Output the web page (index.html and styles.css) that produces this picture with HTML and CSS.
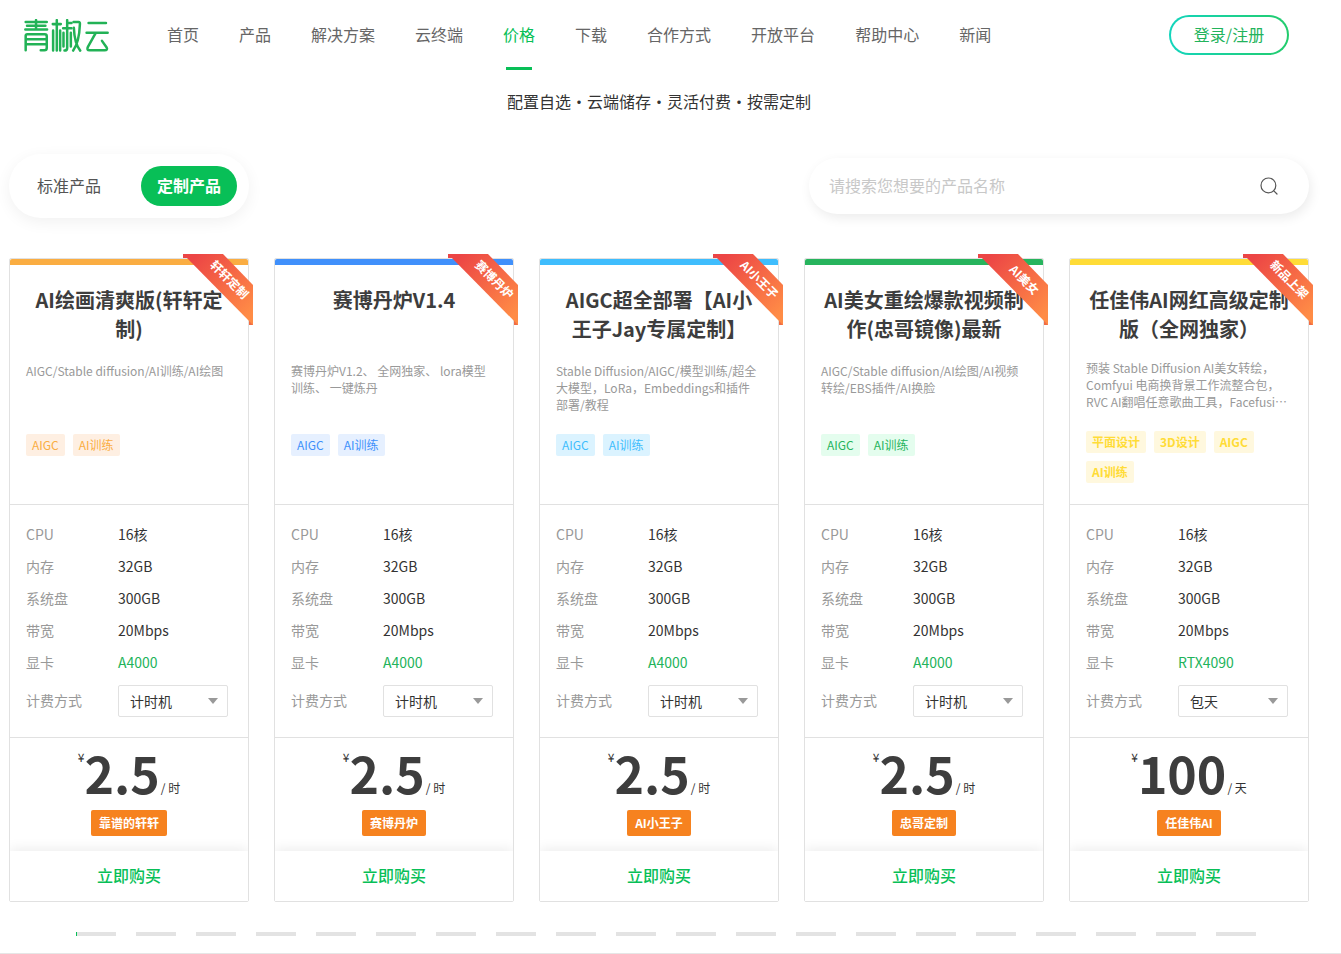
FILE: index.html
```html
<!DOCTYPE html>
<html lang="zh-CN">
<head>
<meta charset="utf-8">
<meta name="viewport" content="width=device-width, initial-scale=1">
<title>青椒云 - 价格</title>
<link rel="stylesheet" href="styles.css">
</head>
<body>
<header class="header">
  <a class="logo" href="#" aria-label="青椒云">
    <svg viewBox="0 0 254 98" width="85" height="33" fill="none" stroke="#22b256" stroke-width="7.5" stroke-linecap="round" stroke-linejoin="round">
      <path d="M5 9H68M9 20H64M4 31H69M36 3V31"/>
      <path d="M5 93V50Q5 45 10 45H62Q68 45 68 51V86Q68 93 61 93H50M5 60H68M5 75H68"/>
      <path d="M86 15H110M98 3V94M87 34V94M108 34V94"/>
      <path d="M129 3V86Q129 94 121 94M129 12H142M117 27H142M118 41V82M140 41V82"/>
      <path d="M148 9H163Q168 9 167 16C166 42 160 76 147 94M149 26C150 52 156 80 168 94"/>
      <path d="M193 12H245M187 41H250M214 42L191 83Q186 93 196 93H241Q251 93 247 85L233 65"/>
    </svg>
  </a>
  <nav class="nav">
    <a class="nav-link" href="#">首页</a>
    <a class="nav-link" href="#">产品</a>
    <a class="nav-link" href="#">解决方案</a>
    <a class="nav-link" href="#">云终端</a>
    <a class="nav-link nav-link-active" href="#" aria-current="page">价格</a>
    <a class="nav-link" href="#">下载</a>
    <a class="nav-link" href="#">合作方式</a>
    <a class="nav-link" href="#">开放平台</a>
    <a class="nav-link" href="#">帮助中心</a>
    <a class="nav-link" href="#">新闻</a>
  </nav>
  <a class="login" href="#">登录/注册</a>
</header>

<main class="main">
  <p class="subtitle">配置自选・云端储存・灵活付费・按需定制</p>

  <div class="toolbar">
    <div class="tabs">
      <button class="tab" type="button">标准产品</button>
      <button class="tab tab-active" type="button">定制产品</button>
    </div>
    <form class="search">
      <input class="search-input" type="text" placeholder="请搜索您想要的产品名称" aria-label="搜索产品">
      <button class="search-button" type="button" aria-label="搜索">
        <svg width="20" height="20" viewBox="0 0 20 20" fill="none" stroke="#555" stroke-width="1.2" stroke-linecap="round"><circle cx="9.4" cy="9.4" r="7.4"/><path d="M14.8 14.8L18 18"/></svg>
      </button>
    </form>
  </div>

  <svg class="defs" width="0" height="0" aria-hidden="true">
    <defs>
      <linearGradient id="ribbon-fill" x1="0" y1="0" x2="1" y2="1">
        <stop offset="0.1" stop-color="#ec4545"/>
        <stop offset="0.9" stop-color="#ff8c46"/>
      </linearGradient>
      <symbol id="ribbon" viewBox="0 0 70 71">
        <path d="M0 0H5V4H0Z" fill="#e9464a"/>
        <path d="M66 66H70V71H66Z" fill="#f06c45"/>
        <path d="M0 0H40L70 31V71Z" fill="url(#ribbon-fill)"/>
      </symbol>
    </defs>
  </svg>

  <section class="cards">
    <article class="card theme-orange">
      <svg class="ribbon" viewBox="0 0 70 71"><use href="#ribbon"/><text class="ribbon-text" transform="translate(46 26) rotate(45)" y="4">轩轩定制</text></svg>
      <div class="summary">
        <h2 class="title">AI绘画清爽版(轩轩定制)</h2>
        <p class="desc">AIGC/Stable diffusion/AI训练/AI绘图</p>
        <div class="tags"><span class="tag">AIGC</span><span class="tag">AI训练</span></div>
      </div>
      <dl class="specs">
        <dt>CPU</dt><dd>16核</dd>
        <dt>内存</dt><dd>32GB</dd>
        <dt>系统盘</dt><dd>300GB</dd>
        <dt>带宽</dt><dd>20Mbps</dd>
        <dt>显卡</dt><dd class="gpu">A4000</dd>
        <dt class="billing"><label for="bill1">计费方式</label></dt>
        <dd class="billing"><span class="picker"><select class="select" id="bill1"><option>计时机</option></select></span></dd>
      </dl>
      <div class="offer">
        <p class="price"><span class="currency">¥</span><strong class="amount">2.5</strong><span class="unit">/ 时</span></p>
        <span class="seller">靠谱的轩轩</span>
      </div>
      <button class="buy" type="button">立即购买</button>
    </article>

    <article class="card theme-blue">
      <svg class="ribbon" viewBox="0 0 70 71"><use href="#ribbon"/><text class="ribbon-text" transform="translate(46 26) rotate(45)" y="4">赛博丹炉</text></svg>
      <div class="summary">
        <h2 class="title">赛博丹炉V1.4</h2>
        <p class="desc">赛博丹炉V1.2、 全网独家、 lora模型训练、 一键炼丹</p>
        <div class="tags"><span class="tag">AIGC</span><span class="tag">AI训练</span></div>
      </div>
      <dl class="specs">
        <dt>CPU</dt><dd>16核</dd>
        <dt>内存</dt><dd>32GB</dd>
        <dt>系统盘</dt><dd>300GB</dd>
        <dt>带宽</dt><dd>20Mbps</dd>
        <dt>显卡</dt><dd class="gpu">A4000</dd>
        <dt class="billing"><label for="bill2">计费方式</label></dt>
        <dd class="billing"><span class="picker"><select class="select" id="bill2"><option>计时机</option></select></span></dd>
      </dl>
      <div class="offer">
        <p class="price"><span class="currency">¥</span><strong class="amount">2.5</strong><span class="unit">/ 时</span></p>
        <span class="seller">赛博丹炉</span>
      </div>
      <button class="buy" type="button">立即购买</button>
    </article>

    <article class="card theme-sky">
      <svg class="ribbon" viewBox="0 0 70 71"><use href="#ribbon"/><text class="ribbon-text" transform="translate(46 26) rotate(45)" y="4">AI小王子</text></svg>
      <div class="summary">
        <h2 class="title">AIGC超全部署【AI小王子Jay专属定制】</h2>
        <p class="desc">Stable Diffusion/AIGC/模型训练/超全大模型，LoRa，Embeddings和插件部署/教程</p>
        <div class="tags"><span class="tag">AIGC</span><span class="tag">AI训练</span></div>
      </div>
      <dl class="specs">
        <dt>CPU</dt><dd>16核</dd>
        <dt>内存</dt><dd>32GB</dd>
        <dt>系统盘</dt><dd>300GB</dd>
        <dt>带宽</dt><dd>20Mbps</dd>
        <dt>显卡</dt><dd class="gpu">A4000</dd>
        <dt class="billing"><label for="bill3">计费方式</label></dt>
        <dd class="billing"><span class="picker"><select class="select" id="bill3"><option>计时机</option></select></span></dd>
      </dl>
      <div class="offer">
        <p class="price"><span class="currency">¥</span><strong class="amount">2.5</strong><span class="unit">/ 时</span></p>
        <span class="seller">AI小王子</span>
      </div>
      <button class="buy" type="button">立即购买</button>
    </article>

    <article class="card theme-green">
      <svg class="ribbon" viewBox="0 0 70 71"><use href="#ribbon"/><text class="ribbon-text" transform="translate(46 26) rotate(45)" y="4">AI美女</text></svg>
      <div class="summary">
        <h2 class="title">AI美女重绘爆款视频制作(忠哥镜像)最新</h2>
        <p class="desc">AIGC/Stable diffusion/AI绘图/AI视频转绘/EBS插件/AI换脸</p>
        <div class="tags"><span class="tag">AIGC</span><span class="tag">AI训练</span></div>
      </div>
      <dl class="specs">
        <dt>CPU</dt><dd>16核</dd>
        <dt>内存</dt><dd>32GB</dd>
        <dt>系统盘</dt><dd>300GB</dd>
        <dt>带宽</dt><dd>20Mbps</dd>
        <dt>显卡</dt><dd class="gpu">A4000</dd>
        <dt class="billing"><label for="bill4">计费方式</label></dt>
        <dd class="billing"><span class="picker"><select class="select" id="bill4"><option>计时机</option></select></span></dd>
      </dl>
      <div class="offer">
        <p class="price"><span class="currency">¥</span><strong class="amount">2.5</strong><span class="unit">/ 时</span></p>
        <span class="seller">忠哥定制</span>
      </div>
      <button class="buy" type="button">立即购买</button>
    </article>

    <article class="card theme-yellow">
      <svg class="ribbon" viewBox="0 0 70 71"><use href="#ribbon"/><text class="ribbon-text" transform="translate(46 26) rotate(45)" y="4">新品上架</text></svg>
      <div class="summary summary-dense">
        <h2 class="title">任佳伟AI网红高级定制版（全网独家）</h2>
        <p class="desc">预装 Stable Diffusion AI美女转绘，Comfyui 电商换背景工作流整合包，RVC AI翻唱任意歌曲工具，Facefusi…</p>
        <div class="tags"><span class="tag">平面设计</span><span class="tag">3D设计</span><span class="tag">AIGC</span><span class="tag">AI训练</span></div>
      </div>
      <dl class="specs">
        <dt>CPU</dt><dd>16核</dd>
        <dt>内存</dt><dd>32GB</dd>
        <dt>系统盘</dt><dd>300GB</dd>
        <dt>带宽</dt><dd>20Mbps</dd>
        <dt>显卡</dt><dd class="gpu">RTX4090</dd>
        <dt class="billing"><label for="bill5">计费方式</label></dt>
        <dd class="billing"><span class="picker"><select class="select" id="bill5"><option>包天</option></select></span></dd>
      </dl>
      <div class="offer">
        <p class="price"><span class="currency">¥</span><strong class="amount">100</strong><span class="unit">/ 天</span></p>
        <span class="seller">任佳伟AI</span>
      </div>
      <button class="buy" type="button">立即购买</button>
    </article>
  </section>

  <div class="pager">
    <span class="page page-active"></span><span class="page"></span><span class="page"></span><span class="page"></span><span class="page"></span>
    <span class="page"></span><span class="page"></span><span class="page"></span><span class="page"></span><span class="page"></span>
    <span class="page"></span><span class="page"></span><span class="page"></span><span class="page"></span><span class="page"></span>
    <span class="page"></span><span class="page"></span><span class="page"></span><span class="page"></span><span class="page"></span>
  </div>
</main>
<hr class="divider">
</body>
</html>
```

FILE: styles.css
```css
* {
  box-sizing: border-box;
}

body,
p,
h2,
dl,
dd {
  margin: 0;
}

body {
  background: #fff;
  color: #333;
  font-family: "Noto Sans CJK SC", sans-serif;
  font-size: 14px;
}

button,
input,
select {
  font-family: inherit;
}

a {
  color: inherit;
  text-decoration: none;
}

.header {
  display: flex;
  align-items: center;
  height: 70px;
  padding: 0 52px 0 24px;
}

.logo {
  display: flex;
  margin-right: 58px;
}

.nav {
  display: flex;
  flex: 1;
  gap: 40px;
  height: 70px;
  color: #666;
  font-size: 16px;
  line-height: 68px;
  white-space: nowrap;
}

.nav-link-active {
  display: flex;
  flex-direction: column;
  color: #08bf57;
}

.nav-link-active::after {
  content: "";
  flex: none;
  align-self: center;
  width: 26px;
  height: 3px;
  margin-top: -1px;
  background: #08bf57;
}

.login {
  width: 120px;
  height: 40px;
  border: 2px solid transparent;
  border-radius: 20px;
  background: linear-gradient(#fff, #fff) padding-box, linear-gradient(90deg, #13d5bd, #22cc6c) border-box;
  color: #22b35b;
  font-size: 16px;
  line-height: 34px;
  text-align: center;
}

.main {
  padding: 0 32px 0 9px;
}

.subtitle {
  padding: 19px 0 1px;
  font-size: 16px;
  line-height: 24px;
  text-align: center;
}

.toolbar {
  display: flex;
  justify-content: space-between;
  align-items: center;
  margin-top: 40px;
}

.tabs {
  display: flex;
  gap: 24px;
  padding: 12px;
  border-radius: 32px;
  box-shadow: 0 4px 16px rgba(0, 0, 0, 0.06);
}

.tab {
  width: 96px;
  height: 40px;
  padding: 0 0 2px;
  border: 0;
  border-radius: 20px;
  background: none;
  color: #555;
  font-size: 16px;
}

.tab-active {
  background: #08bf57;
  color: #fff;
  font-weight: 700;
}

.search {
  display: flex;
  align-items: center;
  width: 500px;
  height: 56px;
  padding: 0 30px 0 20px;
  border-radius: 28px;
  box-shadow: 2px 4px 12px rgba(0, 0, 0, 0.08);
}

.search-input {
  flex: 1;
  height: 40px;
  padding: 0 0 2px;
  border: 0;
  outline: 0;
  background: none;
  font-size: 16px;
}

.search-input::placeholder {
  color: #c8c8c8;
}

.search-button {
  display: flex;
  padding: 0;
  border: 0;
  background: none;
}

.defs {
  position: absolute;
}

.cards {
  display: grid;
  grid-template-columns: repeat(5, 1fr);
  gap: 25px;
  margin-top: 40px;
}

.card {
  position: relative;
  display: flex;
  flex-direction: column;
  border: 1px solid #e1e1e1;
  border-radius: 2px;
}

.ribbon {
  position: absolute;
  top: -5px;
  right: -5px;
  width: 70px;
  height: 71px;
}

.ribbon-text {
  fill: #fff;
  font-size: 12px;
  font-weight: 700;
  text-anchor: middle;
}

.summary {
  height: 246px;
  padding: 20px 16px 0;
  border-top: 6px solid var(--accent);
  border-bottom: 1px solid #e1e1e1;
  border-radius: 2px 2px 0 0;
}

.title {
  min-height: 58px;
  color: #3d3d3d;
  font-size: 20px;
  font-weight: 700;
  line-height: 29px;
  text-align: center;
}

.desc {
  min-height: 51px;
  margin: 19px 0 21px;
  color: #999;
  font-size: 12px;
  line-height: 17px;
}

.summary-dense .desc {
  margin-top: 16px;
}

.tags {
  display: flex;
  flex-wrap: wrap;
  gap: 8px;
}

.tag {
  padding: 0 6px;
  border-radius: 2px;
  background: var(--tint);
  color: var(--accent);
  font-size: 12px;
  line-height: 22px;
}

.summary-dense .tag {
  font-weight: 700;
}

.theme-orange {
  --accent: #faad42;
  --tint: #feefe2;
}

.theme-blue {
  --accent: #4090fb;
  --tint: #e6f0ff;
}

.theme-sky {
  --accent: #3fbdfd;
  --tint: #dbf3ff;
}

.theme-green {
  --accent: #27b45d;
  --tint: #e4fdee;
}

.theme-yellow {
  --accent: #ffdc37;
  --tint: #fff8de;
}

.specs {
  display: grid;
  grid-template-columns: 92px 1fr;
  padding: 13px 16px 14px;
  border-bottom: 1px solid #e1e1e1;
  line-height: 32px;
}

.specs dt {
  color: #999;
}

.specs .gpu {
  color: #22b35b;
}

.specs .billing {
  padding: 7px 0 6px;
}

.specs dt.billing {
  line-height: 30px;
}

.picker {
  display: flex;
  position: relative;
  width: 110px;
}

.picker::after {
  content: "";
  position: absolute;
  top: 13px;
  right: 10px;
  border: 5px solid transparent;
  border-top: 6px solid #999;
  border-bottom: 0;
  pointer-events: none;
}

.select {
  width: 100%;
  height: 32px;
  padding: 0 11px;
  appearance: none;
  border: 1px solid #e1e1e1;
  border-radius: 2px;
  background: none;
  color: #333;
  font-size: 14px;
}

.offer {
  display: flex;
  flex-direction: column;
  align-items: center;
  height: 113px;
}

.price {
  display: flex;
  height: 72px;
  font-size: 12px;
}

.currency {
  padding-top: 10px;
  line-height: 17px;
}

.amount {
  color: #3d3d3d;
  font-size: 50px;
  font-weight: 700;
  line-height: 68px;
}

.unit {
  align-self: flex-end;
  padding: 0 0 14px 1px;
  line-height: 17px;
}

.seller {
  padding: 0 8px;
  border-radius: 2px;
  background: #f6821f;
  color: #fff;
  font-size: 12px;
  font-weight: 700;
  line-height: 26px;
}

.buy {
  height: 50px;
  padding: 0 0 2px;
  border: 0;
  background: #fff;
  box-shadow: 0 -2px 12px rgba(0, 0, 0, 0.08);
  color: #08bf57;
  font-size: 16px;
  font-weight: 500;
  clip-path: inset(-16px 0 0);
}

.pager {
  display: flex;
  justify-content: center;
  gap: 20px;
  padding: 30px 0 17px 14px;
}

.page {
  width: 40px;
  height: 4px;
  background: #e3e3e3;
}

.page-active {
  border-left: 1px solid #08bf57;
}

.divider {
  margin: 0;
  border: 0;
  border-top: 1px solid #e6e6e6;
}
```
